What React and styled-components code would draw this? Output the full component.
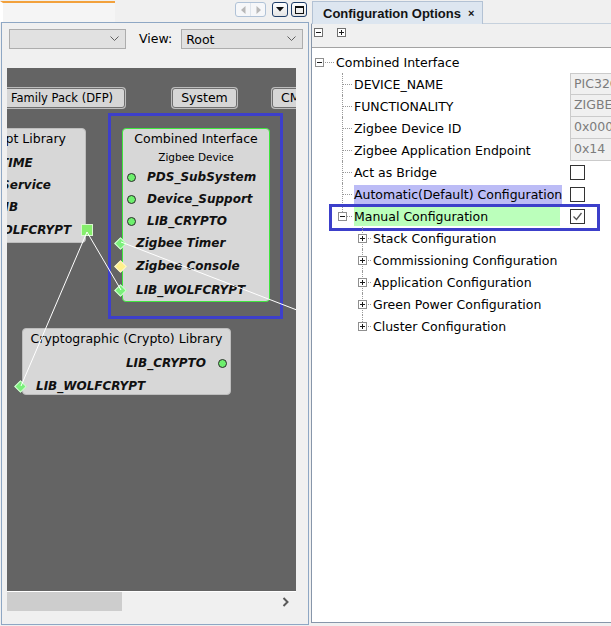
import React from 'react';
import styled, { createGlobalStyle } from 'styled-components';

const GlobalStyle = createGlobalStyle`
  html, body { margin: 0; padding: 0; background: #f0f0f0; }
  body {
    font-family: "DejaVu Sans", "Liberation Sans", sans-serif;
    font-size: 12.5px;
    color: #000;
  }
  * { box-sizing: border-box; }
`;

const Frame = styled.div`
  display: flex;
  width: 611px;
  height: 626px;
  overflow: hidden;
  background: #f0f0f0;
`;

///////// left pane (graph) //////////////

const LeftPane = styled.div`
  flex: 0 0 309px;
  display: flex;
  flex-direction: column;
  padding-bottom: 1px;
`;

const TabStrip = styled.div`
  flex: 0 0 ${p => p.$h}px;
  display: flex;
  align-items: flex-start;
  border-bottom: ${p => p.$line ? '1px solid #c6d1dd' : 'none'};
`;

const BlankTab = styled.div`
  width: 115px;
  height: 21px;
  margin-top: 1px;
  border-top: 2px solid #f2a13c;
  border-left: 3px solid #fff;
  background: #f5f5f5;
`;

const NavGroup = styled.div`
  margin: 2px 2px 0 auto;
  display: flex;
  align-items: center;
`;

const NavPair = styled.div`
  display: flex;
  width: 31px;
  height: 15px;
  border: 1px solid #b0c2d7;
  border-radius: 3px;
  background: #f6f7f9;
  margin-right: 6px;
  span {
    flex: 1;
    display: flex;
    align-items: center;
    justify-content: center;
  }
  span + span { border-left: 1px solid #dfe5ec; }
`;

const NavBtn = styled.div`
  width: 16px;
  height: 15px;
  border: 1px solid #1f3d68;
  border-radius: 3px;
  background: linear-gradient(#ffffff, #e4e4e4);
  display: flex;
  align-items: center;
  justify-content: center;
  margin-left: ${p => p.$gap || 0}px;
`;

const PaneBody = styled.div`
  flex: 1;
  margin-left: 1px;
  border: 1px solid #8ea7c4;
  display: flex;
  flex-direction: column;
`;

const Toolbar = styled.div`
  flex: 0 0 45px;
  display: flex;
  align-items: flex-start;
  padding: 6px 0 0 7px;
`;

const Combo = styled.div`
  width: ${p => p.$w}px;
  height: 20px;
  border: 1px solid #adadad;
  background: #e1e1e1;
  display: flex;
  align-items: center;
  padding: 0 6px 0 4px;
  white-space: nowrap;
  svg { margin-left: auto; }
`;

const ViewLabel = styled.span`
  line-height: 20px;
  margin: 0 9px 0 13px;
`;

const Canvas = styled.div`
  position: relative;
  flex: 0 0 524px;
  margin: 0 12px 0 5px;
  overflow: hidden;
  background: #646464;
  border-bottom: 1px solid #ffffff;
`;

const HScroll = styled.div`
  flex: 0 0 19px;
  margin: 0 12px 0 5px;
  display: flex;
  align-items: center;
`;

const Thumb = styled.div`
  width: 115px;
  align-self: stretch;
  background: #cdcdcd;
`;

const ScrollArrow = styled.span`
  margin: 0 7px 0 auto;
  line-height: 0;
`;

///////// diagram parts //////////////

const CanvasButton = styled.div`
  position: absolute;
  left: ${p => p.$x}px;
  top: 20px;
  width: ${p => p.$w}px;
  height: 20px;
  background: #d6d6d6;
  border: 1px solid #6f6f6f;
  border-radius: 3px;
  box-shadow: 0 0 0 1px #bdbdbd;
  text-align: center;
  line-height: 18px;
  font-size: ${p => p.$fs || 12.5}px;
  white-space: nowrap;
`;

const Selection = styled.div`
  position: absolute;
  left: 101px;
  top: 45px;
  width: 175px;
  height: 206px;
  border: 3px solid #3d3fca;
`;

const Node = styled.div`
  position: absolute;
  left: ${p => p.$x}px;
  top: ${p => p.$y}px;
  width: ${p => p.$w}px;
  height: ${p => p.$h}px;
  background: #d7d7d7;
  border: 1px solid ${p => p.$edge || '#bdbdbd'};
  border-radius: 4px;
  display: flex;
  flex-direction: column;
`;

const NodeTitle = styled.div`
  flex: 0 0 ${p => p.$h}px;
  line-height: ${p => p.$lh || 19}px;
  text-align: ${p => p.$align || 'center'};
  padding-right: ${p => p.$pr || 0}px;
  white-space: nowrap;
`;

const NodeSub = styled.div`
  flex: 0 0 18px;
  line-height: 18px;
  font-size: 10.5px;
  text-align: center;
`;

const Port = styled.div`
  position: relative;
  flex: 0 0 ${p => p.$h || 22}px;
  display: flex;
  align-items: center;
  justify-content: ${p => p.$end ? 'flex-end' : 'flex-start'};
  gap: ${p => p.$gap || 11}px;
  padding-left: ${p => p.$pl || 0}px;
  padding-right: ${p => p.$pr || 0}px;
  font-size: 12px;
  font-weight: bold;
  font-style: italic;
  color: #111;
  white-space: nowrap;
`;

const Dot = styled.span`
  flex: none;
  width: 9px;
  height: 9px;
  border-radius: 50%;
  background: #6df06d;
  border: 1px solid #2b2b2b;
`;

const Diamond = styled.span`
  position: absolute;
  left: -7px;
  top: 50%;
  width: 9px;
  height: 9px;
  margin-top: -4.5px;
  transform: rotate(45deg);
  background: ${p => p.$warn ? '#fff08c' : '#7bf07b'};
  border: 1px solid ${p => p.$warn ? '#fbf6d2' : '#dcfadc'};
`;

const Square = styled.span`
  position: absolute;
  right: -8px;
  top: 50%;
  width: 12px;
  height: 12px;
  margin-top: -6px;
  background: #86ee6c;
  border: 1px solid #d9f6d0;
`;

const Wires = styled.svg`
  position: absolute;
  left: 0;
  top: 0;
  pointer-events: none;
`;

///////// right pane (configuration) //////////////

const RightPane = styled.div`
  flex: 0 0 420px;
  margin-left: 2px;
  display: flex;
  flex-direction: column;
  padding-bottom: 3px;
`;

const ActiveTab = styled.div`
  position: relative;
  z-index: 1;
  margin: 1px 0 -1px 1px;
  height: 23px;
  padding: 0 8px 0 10px;
  display: flex;
  align-items: center;
  gap: 7px;
  background: #dde6f0;
  border: 1px solid #b3c2d4;
  border-bottom: none;
  font-family: "Liberation Sans", Arial, sans-serif;
  font-weight: bold;
  font-size: 13px;
  color: #141414;
  small { font-size: 11px; }
`;

const RightBody = styled.div`
  flex: 1;
  display: flex;
  flex-direction: column;
  border-left: 1px solid #8796aa;
  border-bottom: 1px solid #8796aa;
`;

const MiniBar = styled.div`
  flex: 0 0 23px;
  display: flex;
  align-items: flex-start;
  gap: 14px;
  padding: 4px 0 0 2px;
  line-height: 0;
`;

const TreeArea = styled.div`
  flex: 1;
  background: #ffffff;
  border-top: 1px solid #a3a3a3;
  padding-top: 3px;
`;

const Row = styled.div`
  position: relative;
  display: grid;
  grid-template-columns: 258px 140px;
  height: 22px;
`;

const TreeCell = styled.div`
  display: flex;
  align-items: center;
`;

const Guide = styled.span`
  position: relative;
  flex: 0 0 ${p => p.$w}px;
  align-self: stretch;
  &::before {
    content: '';
    display: ${p => p.$root ? 'none' : 'block'};
    position: absolute;
    left: ${p => p.$x}px;
    top: 0;
    height: ${p => p.$last ? '11px' : '100%'};
    border-left: 1px dotted #9a9a9a;
  }
  &::after {
    content: '';
    position: absolute;
    left: ${p => p.$x}px;
    right: 2px;
    top: 11px;
    border-top: 1px dotted #9a9a9a;
  }
`;

const ExpBox = styled.span`
  position: absolute;
  left: ${p => p.$x - 4}px;
  top: 7px;
  line-height: 0;
  z-index: 1;
`;

const Label = styled.span`
  flex: 1;
  margin-right: 10px;
  height: 19px;
  line-height: 19px;
  background: ${p => p.$hl || 'transparent'};
  white-space: nowrap;
`;

const ValueBox = styled.div`
  height: 22px;
  padding-left: 3px;
  line-height: 20px;
  background: #f0f0f0;
  border: 1px solid #cbcbcb;
  border-top-width: ${p => p.$first ? 1 : 0}px;
  color: #7c7c7c;
  white-space: nowrap;
  overflow: hidden;
`;

const CheckBox = styled.span`
  align-self: center;
  width: 15px;
  height: 15px;
  border: 1px solid #333;
  background: #fff;
  display: flex;
  align-items: center;
  justify-content: center;
`;

const Outline = styled.div`
  position: absolute;
  left: 17px;
  top: -1px;
  width: 271px;
  height: 27px;
  border: 3px solid #3c3fca;
  pointer-events: none;
`;

///////// icons //////////////

const Chevron = () => (
  <svg width="9" height="6" viewBox="0 0 9 6"><polyline points="0.5,0.5 4.5,4.5 8.5,0.5" fill="none" stroke="#5f5f5f" /></svg>
);

const BoxIcon = ({ open, edge = '#8f8f8f' }) => (
  <svg width="9" height="9" viewBox="0 0 9 9">
    <rect x="0.5" y="0.5" width="8" height="8" fill="#fff" stroke={edge} />
    <line x1="2" y1="4.5" x2="7" y2="4.5" stroke="#1a1a1a" />
    {!open && <line x1="4.5" y1="2" x2="4.5" y2="7" stroke="#1a1a1a" />}
  </svg>
);

const Tick = () => (
  <svg width="13" height="13" viewBox="0 0 13 13"><polyline points="2.5,6.5 5.5,9.5 10.5,3" fill="none" stroke="#555" strokeWidth="1.3" /></svg>
);

///////// data //////////////

const settings = [
  { label: 'DEVICE_NAME', value: 'PIC32CX1012BZ25048' },
  { label: 'FUNCTIONALITY', value: 'ZIGBEE_COMBINED_INTERFACE' },
  { label: 'Zigbee Device ID', value: '0x0007' },
  { label: 'Zigbee Application Endpoint', value: '0x14' },
  { label: 'Act as Bridge', check: false },
  { label: 'Automatic(Default) Configuration', check: false, hl: '#bcbcf6' },
];

const groups = ['Stack Configuration', 'Commissioning Configuration', 'Application Configuration', 'Green Power Configuration', 'Cluster Configuration'];

const combinedPorts = [
  { name: 'PDS_SubSystem', out: true },
  { name: 'Device_Support', out: true },
  { name: 'LIB_CRYPTO', out: true },
  { name: 'Zigbee Timer' },
  { name: 'Zigbee Console', warn: true, h: 24 },
  { name: 'LIB_WOLFCRYPT', h: 24 },
];

const GraphPane = () => (
  <LeftPane>
    <TabStrip $h={22}>
      <BlankTab />
      <NavGroup>
        <NavPair>
          <span><svg width="5" height="8"><polygon points="4.5,0 0,4 4.5,8" fill="#b8b8b8" /></svg></span>
          <span><svg width="5" height="8"><polygon points="0.5,0 5,4 0.5,8" fill="#b8b8b8" /></svg></span>
        </NavPair>
        <NavBtn><svg width="8" height="5"><polygon points="0,0 8,0 4,4.5" fill="#111" /></svg></NavBtn>
        <NavBtn $gap={3}><svg width="9" height="8"><rect x="0.5" y="0.5" width="8" height="7" fill="none" stroke="#111" /><line x1="0" y1="1.5" x2="9" y2="1.5" stroke="#111" /></svg></NavBtn>
      </NavGroup>
    </TabStrip>
    <PaneBody>
      <Toolbar>
        <Combo $w={117}><Chevron /></Combo>
        <ViewLabel>View:</ViewLabel>
        <Combo $w={122}>Root<Chevron /></Combo>
      </Toolbar>
      <Canvas>
        <CanvasButton $x={-8} $w={126} $fs={11.5}>Family Pack (DFP)</CanvasButton>
        <CanvasButton $x={165} $w={65}>System</CanvasButton>
        <CanvasButton $x={265} $w={90}>CMSIS Pack</CanvasButton>

        <Node $x={-90} $y={60} $w={169} $h={115}>
          <NodeTitle $h={23} $lh={20} $align="right" $pr={19}>wolfCrypt Library</NodeTitle>
          <Port $pl={50}>SYS_TIME</Port>
          <Port $pl={46}>Core_Service</Port>
          <Port $pl={47}>SYS_LIB</Port>
          <Port $pl={44} $h={24}>LIB_WOLFCRYPT<Square /></Port>
        </Node>

        <Selection />
        <Node $x={115} $y={60} $w={148} $h={174} $edge="#3ee63e">
          <NodeTitle $h={19}>Combined Interface</NodeTitle>
          <NodeSub>Zigbee Device</NodeSub>
          {combinedPorts.map(p => p.out ? (
            <Port key={p.name} $pl={4}><Dot />{p.name}</Port>
          ) : (
            <Port key={p.name} $pl={13} $h={p.h}><Diamond $warn={p.warn} />{p.name}</Port>
          ))}
        </Node>

        <Node $x={15} $y={260} $w={209} $h={67}>
          <NodeTitle $h={23} $lh={20}>Cryptographic (Crypto) Library</NodeTitle>
          <Port $end $gap={12} $pr={3}>LIB_CRYPTO<Dot /></Port>
          <Port $pl={13} $h={24}><Diamond />LIB_WOLFCRYPT</Port>
        </Node>

        <Wires width="289" height="523">
          <line x1="80" y1="164" x2="114" y2="222" stroke="#fff" />
          <line x1="80" y1="164" x2="14" y2="318" stroke="#fff" />
          <line x1="114" y1="174" x2="295" y2="244" stroke="#fff" />
        </Wires>
      </Canvas>
      <HScroll>
        <Thumb />
        <ScrollArrow>
          <svg width="7" height="10"><polyline points="1.5,1 5.5,5 1.5,9" fill="none" stroke="#5a5a5a" strokeWidth="2" /></svg>
        </ScrollArrow>
      </HScroll>
    </PaneBody>
  </LeftPane>
);

const ConfigPane = () => (
  <RightPane>
    <TabStrip $h={24} $line>
      <ActiveTab>Configuration Options <small>×</small></ActiveTab>
    </TabStrip>
    <RightBody>
      <MiniBar>
        <BoxIcon open edge="#6f6f6f" />
        <BoxIcon edge="#6f6f6f" />
      </MiniBar>
      <TreeArea>
        <Row>
          <TreeCell>
            <Guide $w={24} $x={7} $root><ExpBox $x={7}><BoxIcon open /></ExpBox></Guide>
            <Label>Combined Interface</Label>
          </TreeCell>
        </Row>

        {settings.map((s, i) => (
          <Row key={s.label}>
            <TreeCell>
              <Guide $w={42} $x={30} />
              <Label $hl={s.hl}>{s.label}</Label>
            </TreeCell>
            {s.value
              ? <ValueBox $first={i === 0}>{s.value}</ValueBox>
              : <CheckBox>{s.check && <Tick />}</CheckBox>}
          </Row>
        ))}

        <Row>
          <TreeCell>
            <Guide $w={42} $x={30} $last><ExpBox $x={30}><BoxIcon open /></ExpBox></Guide>
            <Label $hl="#bbffbb">Manual Configuration</Label>
          </TreeCell>
          <CheckBox><Tick /></CheckBox>
          <Outline />
        </Row>

        {groups.map((g, i) => (
          <Row key={g}>
            <TreeCell>
              <Guide $w={61} $x={50} $last={i === groups.length - 1}><ExpBox $x={50}><BoxIcon /></ExpBox></Guide>
              <Label>{g}</Label>
            </TreeCell>
          </Row>
        ))}
      </TreeArea>
    </RightBody>
  </RightPane>
);

const App = () => (
  <>
    <GlobalStyle />
    <Frame>
      <GraphPane />
      <ConfigPane />
    </Frame>
  </>
);

export default App;
